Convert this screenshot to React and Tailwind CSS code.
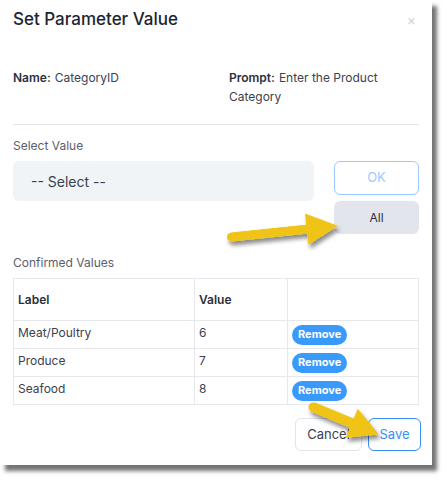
import React from "react";

const rows = [
  { label: "Meat/Poultry", value: 6 },
  { label: "Produce", value: 7 },
  { label: "Seafood", value: 8 },
];

// yellow callout arrow, drawn from tail to tip
const Arrow = ({ x1, y1, x2, y2, shaft = 8, headLen = 30, headHalf = 15 }) => {
  const dx = x2 - x1;
  const dy = y2 - y1;
  const len = Math.hypot(dx, dy);
  const ux = dx / len;
  const uy = dy / len;
  const nx = -uy;
  const ny = ux;
  const bx = x2 - ux * headLen;
  const by = y2 - uy * headLen;
  const h = shaft / 2;
  const pts = [
    [x1 + nx * h, y1 + ny * h],
    [bx + nx * h, by + ny * h],
    [bx + nx * headHalf, by + ny * headHalf],
    [x2, y2],
    [bx - nx * headHalf, by - ny * headHalf],
    [bx - nx * h, by - ny * h],
    [x1 - nx * h, y1 - ny * h],
  ]
    .map((p) => p.join(","))
    .join(" ");
  return (
    <g filter="url(#arrowShadow)">
      <circle cx={x1} cy={y1} r={h} fill="#f0c419" />
      <polygon points={pts} fill="#f0c419" strokeLinejoin="round" stroke="#f0c419" strokeWidth="1" />
    </g>
  );
};

export default function App() {
  return (
    <div className="relative w-[447px] h-[481px] bg-white overflow-hidden" style={{ fontFamily: "Inter, 'Noto Sans', sans-serif" }}>
      <div className="w-[432px] h-[465px] bg-white flex flex-col shadow-[5px_6px_4px_rgba(0,0,0,0.55)]">
        {/* header */}
        <div className="flex items-start justify-between px-[13px] pt-[7px]">
          <h2 className="text-[17px] leading-[24px] font-medium text-[#1e2430]">Set Parameter Value</h2>
          <span className="text-[14px] leading-[24px] text-[#cfd2d8] mr-[3px] mt-[1px]">×</span>
        </div>

        {/* parameter info */}
        <div className="flex px-[13px] mt-[36px] text-[12px] leading-[19px] text-[#3b4150]">
          <p className="w-[216px]">
            <b className="font-semibold text-[#2b303b] mr-[4px]">Name:</b>CategoryID
          </p>
          <p className="w-[160px]">
            <b className="font-semibold text-[#2b303b] mr-[4px]">Prompt:</b>Enter the Product Category
          </p>
        </div>

        <div className="mx-[13px] mt-[18px] border-t border-[#e3e5e9]" />

        {/* select */}
        <div className="px-[13px] mt-[12px]">
          <div className="text-[12px] leading-[18px] text-[#5a606c]">Select Value</div>
          <div className="flex justify-between mt-[6px]">
            <div className="w-[301px] h-[40px] rounded-md bg-[#f1f4f7] flex items-center pl-[18px]">
              <span className="text-[14px] text-[#3b4150]">-- Select --</span>
            </div>
            <div className="flex flex-col gap-[6px] w-[85px]">
              <button className="h-[34px] rounded-md border border-[#9ccaff] text-[13px] text-[#9ccaff] bg-white">OK</button>
              <button className="h-[33px] rounded-md bg-[#e2e5ec] text-[12px] text-[#2b2f3a]">All</button>
            </div>
          </div>
        </div>

        {/* confirmed values */}
        <div className="px-[13px] mt-[20px]">
          <div className="text-[12px] leading-[18px] text-[#5a606c]">Confirmed Values</div>
          <table className="w-full mt-[6px] border-collapse text-[12px] text-[#3b4150]">
            <thead>
              <tr className="h-[42px]">
                <th className="w-[181px] border border-[#e6e8ee] text-left font-semibold text-[#2b303b] px-[4px]">Label</th>
                <th className="w-[93px] border border-[#e6e8ee] text-left font-semibold text-[#2b303b] px-[4px]">Value</th>
                <th className="border border-[#e6e8ee]" />
              </tr>
            </thead>
            <tbody>
              {rows.map((r) => (
                <tr key={r.label} className="h-[28px]">
                  <td className="border border-[#e6e8ee] px-[4px] pb-[4px]">{r.label}</td>
                  <td className="border border-[#e6e8ee] px-[4px] pb-[4px]">{r.value}</td>
                  <td className="border border-[#e6e8ee] px-[4px]">
                    <span className="inline-flex items-center h-[20px] px-[6px] rounded-full bg-[#3a9afc] text-white text-[11px] font-bold">Remove</span>
                  </td>
                </tr>
              ))}
            </tbody>
          </table>
        </div>

        {/* footer */}
        <div className="flex justify-end gap-[6px] px-[11px] mt-[13px]">
          <button className="w-[67px] h-[33px] rounded-md border border-[#e2e4ea] bg-white text-[13px] text-[#3b4150]">Cancel</button>
          <button className="w-[53px] h-[33px] rounded-md border border-[#3a8ff2] bg-white text-[13px] text-[#3a8ff2]">Save</button>
        </div>
      </div>

      {/* callout arrows */}
      <svg className="absolute inset-0 pointer-events-none" width="447" height="481">
        <defs>
          <filter id="arrowShadow" x="-20%" y="-50%" width="140%" height="200%">
            <feDropShadow dx="2" dy="4" stdDeviation="2" floodColor="#000" floodOpacity="0.45" />
          </filter>
        </defs>
        <Arrow x1={231} y1={237} x2={337} y2={226} />
        <Arrow x1={313} y1={407} x2={378} y2={434} shaft={9} headLen={28} headHalf={15} />
      </svg>
    </div>
  );
}
